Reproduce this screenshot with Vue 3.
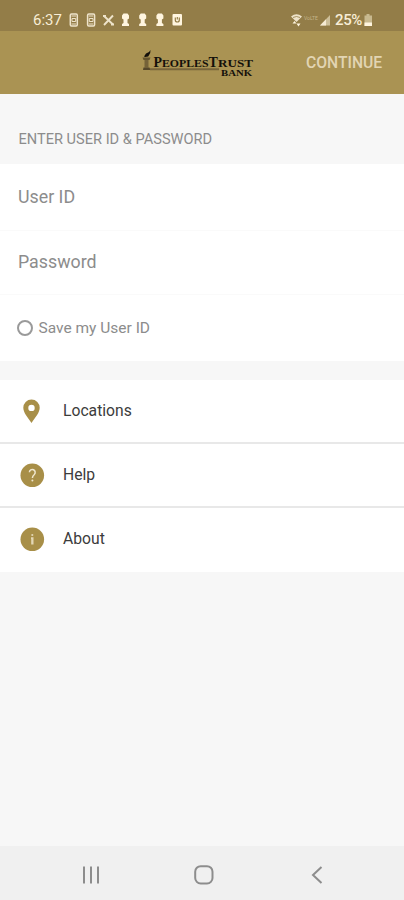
<script setup>
const links = [
  { id: 'pin', label: 'Locations' },
  { id: 'help', label: 'Help' },
  { id: 'info', label: 'About' },
]
</script>

<template>
  <div class="screen">
    <div class="status">
      <span class="time">6:37</span>
      <svg class="notes" width="116" height="16" viewBox="0 0 116 16" fill="none" stroke="#eee3ca">
        <g v-for="x in [0, 17.3]" :key="x" :transform="`translate(${x} 0)`">
          <rect x="3.300" y="2" width="7" height="12" rx="1.200" stroke-width="1.500" />
          <path d="M4.500 4h4.500M4.500 12h4.500" stroke-width="1" />
          <path d="M5 6.500h3.700v3H5z" stroke-width="1" />
        </g>
        <path d="M37 4l9 8.500M46 3.500l-9 9.500" stroke-width="1.900" />
        <path d="M36 4h3M44 12.500h3" stroke-width="2" />
        <g v-for="x in [0, 17.2, 34.4]" :key="'k' + x" :transform="`translate(${x} 0)`" fill="#fff5df" stroke="none">
          <path d="M56.500 1.500h4l1.500 2v3l-1.500 1v3.500l1.500 1v2h-7v-2l1.500-1V7.500l-1.500-1v-3z" />
        </g>
        <rect x="105.500" y="2" width="9.500" height="11.500" rx="1" fill="#fff5df" stroke="none" />
        <path d="M108.300 5.500v2.500a2 2 0 0 0 4 0V5.500M110.300 5v2.500" stroke="#937d48" stroke-width="1.200" />
      </svg>
      <svg class="signals" width="44" height="16" viewBox="0 0 44 16">
        <path d="M1 4.500Q6.500-.2 12 4.500L6.500 10z" fill="#eee3ca" />
        <path d="M3 5.500q3.500-2 7 0" fill="none" stroke="#937d48" stroke-width=".8" />
        <path d="M2.500 11.500l2-2.500 2 2.500zM6.500 11.500h4l-2 3z" fill="#fff5df" />
        <text x="14" y="7.500" class="carrier" textLength="14" lengthAdjust="spacingAndGlyphs">VoLTE</text>
        <path d="M30 13.500L40 3v10.500z" fill="#cdbf9a" />
        <path d="M30 13.500l6-6.300v6.300z" fill="#f5ead3" />
      </svg>
      <span class="percent">25%</span>
      <svg class="battery" width="9" height="14" viewBox="0 0 9 14">
        <path d="M2.500 1h3v1.500H8V13H.5V2.500h2z" fill="#c8b98f" />
        <path d="M.5 9.500H8V13H.5z" fill="#fff5df" />
      </svg>
    </div>

    <header class="bar">
      <svg class="logo" width="114" height="30" viewBox="0 0 114 30">
        <path d="M3 8.500l2-3 3-1.500 1.500-2-.3 3-2 3.500-3 .5z" fill="#14100a" />
        <path d="M1.500 9.500h8l-1 2.500H2.500z" fill="#65552f" />
        <path d="M3.500 12h4v7.500h-4z" fill="#756238" />
        <path d="M2.500 19.500h6l1 2.500H2z" fill="#55472a" />
        <path d="M9 20.300h69v2H9z" fill="#78653b" />
        <g class="wordmark">
          <text x="12.500" y="19" font-size="14" textLength="8.500" lengthAdjust="spacingAndGlyphs">P</text>
          <text x="21" y="19" font-size="11" textLength="46.500" lengthAdjust="spacingAndGlyphs">EOPLES</text>
          <text x="67.500" y="19" font-size="14.500" textLength="9.300" lengthAdjust="spacingAndGlyphs">T</text>
          <text x="77" y="19" font-size="11" textLength="35" lengthAdjust="spacingAndGlyphs">RUST</text>
          <text x="80" y="27.500" font-size="8.500" textLength="31" lengthAdjust="spacingAndGlyphs">BANK</text>
        </g>
      </svg>
      <span class="continue">CONTINUE</span>
    </header>

    <h1 class="heading">ENTER USER ID &amp; PASSWORD</h1>

    <section class="form">
      <div class="field">User ID</div>
      <div class="field second">Password</div>
      <div class="save"><i class="circle"></i><span>Save my User ID</span></div>
    </section>

    <nav class="links">
      <div v-for="link in links" :key="link.id" class="link">
        <svg width="26" height="26" viewBox="0 0 26 26">
          <path v-if="link.id === 'pin'" fill="#a88f48" fill-rule="evenodd" d="M12.500 1.500a8.200 8.200 0 0 1 8.200 8.300c0 4.800-4.200 9.400-8.200 15.200-4-5.800-8.200-10.400-8.200-15.200a8.200 8.200 0 0 1 8.200-8.300zm0 5.200a3.200 3.200 0 1 0 0 6.400 3.200 3.200 0 0 0 0-6.400z" />
          <template v-else>
            <circle cx="13.300" cy="13.300" r="11.800" fill="#a88f48" />
            <g v-if="link.id === 'help'">
              <path d="M10.400 10.300a2.900 2.900 0 1 1 4.900 2.200c-1.300 1.100-1.900 1.700-1.900 3.400" fill="none" stroke="#f0e7ce" stroke-width="1.500" />
              <circle cx="13.400" cy="18.500" r="1" fill="#f0e7ce" />
            </g>
            <g v-else fill="#e3d7b5">
              <circle cx="13.300" cy="9" r="1.100" />
              <path d="M12 11.300h2.500v7.200h-2.300v-5.500H12z" />
            </g>
          </template>
        </svg>
        <span>{{ link.label }}</span>
      </div>
    </nav>

    <footer class="system">
      <svg width="20" height="20" viewBox="0 0 20 20"><path d="M3 1.500v17M10 1.500v17M17 1.500v17" /></svg>
      <svg width="20" height="20" viewBox="0 0 20 20"><rect x="1.200" y="1.200" width="17.300" height="17.300" rx="5.500" /></svg>
      <svg width="20" height="20" viewBox="0 0 20 20"><path d="M14.500 2L6 10l8.500 8" /></svg>
    </footer>
  </div>
</template>

<style>
body { background: #f7f7f7; }
</style>

<style scoped>
.screen {
  display: flex;
  flex-direction: column;
  width: 404px;
  height: 900px;
  overflow: hidden;
  background: #f7f7f7;
  font-family: Roboto, "Liberation Sans", sans-serif;
  color: #8c8c8c;
}
.status {
  display: flex;
  align-items: center;
  box-sizing: border-box;
  height: 31px;
  padding: 9px 31px 0 33px;
  background: #937d48;
  color: #f8edd6;
}
.time { width: 34px; font-size: 15px; }
.notes { display: block; }
.signals { display: block; margin-left: 107px; }
.carrier { font: 6px Roboto, sans-serif; fill: #c4b48a; }
.percent { width: 29px; margin-left: 1px; font-size: 15px; font-weight: 500; letter-spacing: -0.400px; white-space: nowrap; }
.battery { display: block; flex: none; }
.bar {
  display: flex;
  align-items: center;
  box-sizing: border-box;
  height: 63px;
  padding-left: 141px;
  background: #aa9353;
}
.logo { display: block; }
.wordmark { font-family: "Liberation Serif", serif; font-weight: 700; fill: #14100a; }
.continue { margin: 0 0 0 51px; font-size: 15.700px; font-weight: 500; color: #e2d5b3; }
.heading {
  box-sizing: border-box;
  height: 70px;
  margin: 0;
  padding: 34px 0 0 18.500px;
  font-size: 14.600px;
  line-height: 22px;
  font-weight: 400;
}
.form { height: 197px; background: #fff; }
.field {
  box-sizing: border-box;
  height: 67px;
  padding: 0 18px;
  border-bottom: 1px solid #fafafa;
  font-size: 17.800px;
  line-height: 66px;
}
.second { height: 64px; line-height: 61px; }
.save {
  display: flex;
  align-items: center;
  height: 65px;
  padding-left: 17px;
  font-size: 15.500px;
}
.circle {
  box-sizing: border-box;
  width: 16px;
  height: 16px;
  margin-right: 5.500px;
  border: 2px solid #9a9a9a;
  border-radius: 50%;
}
.links { margin-top: 19px; background: #fff; }
.link {
  display: flex;
  align-items: center;
  box-sizing: border-box;
  height: 64px;
  padding-left: 19px;
  border-bottom: 2px solid #e8e8e8;
  font-size: 15.700px;
  color: #3c3c3c;
}
.link:last-child { border-bottom-color: #fff; }
.link span { margin-left: 18px; margin-top: -2px; }
.system {
  display: flex;
  justify-content: space-between;
  align-items: center;
  box-sizing: border-box;
  height: 54px;
  margin-top: auto;
  padding: 3px 77px 0 81px;
  background: #f0f0f0;
}
.system svg { fill: none; stroke: #8d8d8d; stroke-width: 2; }
</style>
